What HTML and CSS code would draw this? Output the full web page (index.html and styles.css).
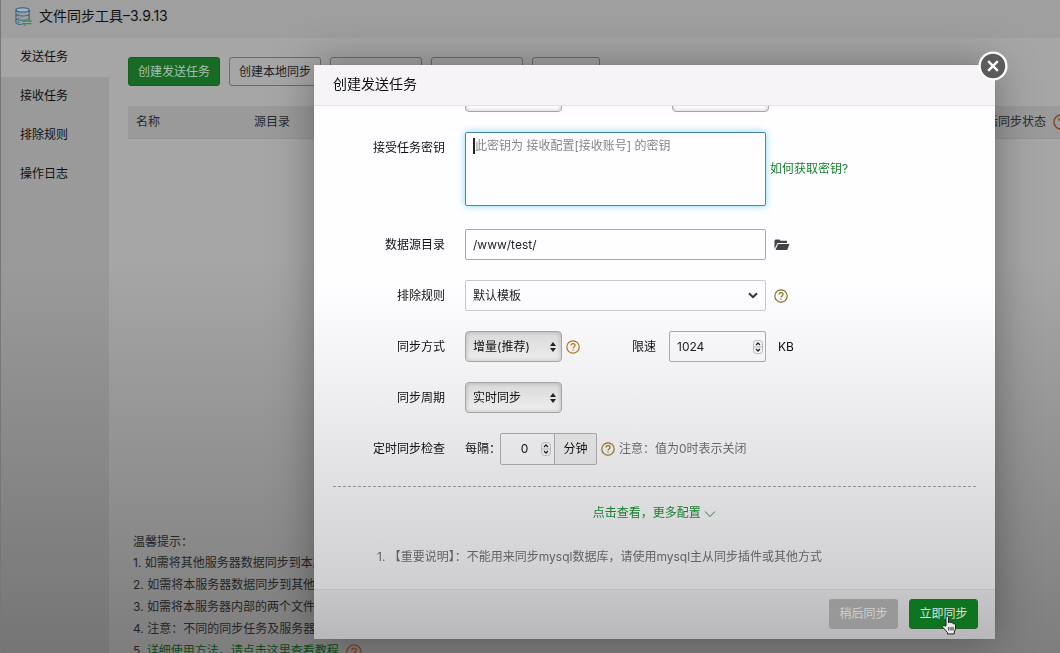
FILE: index.html
```html
<!DOCTYPE html>
<html lang="zh-CN">
<head>
<meta charset="utf-8">
<title>文件同步工具–3.9.13</title>
<link rel="stylesheet" href="styles.css">
</head>
<body>
<svg class="defs" aria-hidden="true">
  <symbol id="help" viewBox="0 0 14 14"><circle cx="7" cy="7" r="6.2"/><path d="M5 5.6C5 4.3 5.9 3.7 7 3.7s2 .7 2 1.8C9 6.9 7 6.9 7 8.4M7 9.5v1.2"/></symbol>
  <symbol id="updown" viewBox="0 0 6 10"><path d="M0 4L3 0l3 4zM0 6h6L3 10z"/></symbol>
  <symbol id="spin" viewBox="0 0 10 14"><rect x=".5" y=".5" width="9" height="13" rx="3"/><path class="mid" d="M0 7h10"/><path class="tick" d="M3 5l2-2 2 2M3 9l2 2 2-2"/></symbol>
</svg>

<div class="app">
  <header class="titlebar">
    <svg class="logo" viewBox="0 0 18 20" aria-hidden="true">
      <g fill="none" stroke="#2c5f88" stroke-width="1.100"><ellipse cx="8" cy="3" rx="7" ry="2.300" fill="#a4b4c2"/><path d="M1 3v4.500q1 2 7 2t7-2V3M1 7.500V12q1 2 7 2t7-2V7.500M1 12v4.500q1 2 6 2M15 12v1"/><path d="M3 7.300h1.500M3 11.800h1.500M3 16.200h1.500"/></g>
      <path d="M8 15h9l-2.500-2.500M17.500 17.500h-9L11 20" fill="none" stroke="#3c8f4c" stroke-width="1.300"/>
    </svg>
    <h1>文件同步工具–3.9.13</h1>
  </header>
  <div class="columns">
    <nav class="side">
      <a class="active" href="#send">发送任务</a>
      <a href="#receive">接收任务</a>
      <a href="#exclude">排除规则</a>
      <a href="#log">操作日志</a>
    </nav>
    <main class="content">
      <div class="toolbar">
        <button class="btn green">创建发送任务</button>
        <button class="btn">创建本地同步</button>
        <button class="btn"></button>
        <button class="btn"></button>
        <button class="btn small"></button>
      </div>
      <div class="listing">
        <table>
          <thead><tr><th class="name">名称</th><th>源目录</th><th class="state">后同步状态 <svg class="help hot"><use href="#help"/></svg></th></tr></thead>
        </table>
      </div>
      <section class="tips">
        <p>温馨提示：</p>
        <ol>
          <li>如需将其他服务器数据同步到本服</li>
          <li>如需将本服务器数据同步到其他服</li>
          <li>如需将本服务器内部的两个文件夹</li>
          <li>注意：不同的同步任务及服务器请</li>
          <li><a href="#guide">详细使用方法，请点击这里查看教程</a> <svg class="help hot"><use href="#help"/></svg></li>
        </ol>
      </section>
    </main>
  </div>
</div>

<div class="overlay">
  <form class="dialog" role="dialog" aria-labelledby="dialog-title">
    <header class="dialog-head"><h2 id="dialog-title">创建发送任务</h2></header>
    <button class="close" type="button" aria-label="关闭"><svg viewBox="0 0 28 28"><circle cx="14" cy="14" r="12.500"/><path d="M9.500 9.500l9 9M18.500 9.500l-9 9"/></svg></button>
    <div class="dialog-body">
      <div class="row first">
        <span class="label"></span>
        <select class="mac" aria-label="类型"></select>
        <select class="mac second" aria-label="模式"></select>
      </div>
      <div class="row tall">
        <label class="label" for="key">接受任务密钥</label>
        <div class="stack wide"><textarea id="key" class="field focus" placeholder="此密钥为 接收配置[接收账号] 的密钥"></textarea><i class="caret"></i></div>
        <a class="link how" href="#key-help">如何获取密钥?</a>
      </div>
      <div class="row">
        <label class="label" for="src">数据源目录</label>
        <input id="src" class="field wide" value="/www/test/">
        <button class="icon-btn" type="button" aria-label="选择目录"><svg class="folder" viewBox="0 0 15 12"><path d="M0 10V1.500L1 .5h4l1 1.200h6.500V4H3z"/><path d="M3.500 5H15l-2.300 6H1z"/></svg></button>
      </div>
      <div class="row">
        <label class="label" for="rule">排除规则</label>
        <div class="stack wide"><select id="rule" class="field pale"><option>默认模板</option></select><svg class="chev" viewBox="0 0 10 7"><path d="M1 1.200l4 4 4-4"/></svg></div>
        <svg class="help olive spaced"><use href="#help"/></svg>
      </div>
      <div class="row">
        <label class="label" for="mode">同步方式</label>
        <div class="stack"><select id="mode" class="mac"><option>增量(推荐)</option></select><svg class="updown"><use href="#updown"/></svg></div>
        <svg class="help gold"><use href="#help"/></svg>
        <label class="limit" for="limit">限速</label>
        <div class="stack speed"><input id="limit" class="field" type="number" value="1024"><svg class="spin"><use href="#spin"/></svg></div>
        <span class="unit">KB</span>
      </div>
      <div class="row">
        <label class="label" for="cycle">同步周期</label>
        <div class="stack"><select id="cycle" class="mac"><option>实时同步</option></select><svg class="updown"><use href="#updown"/></svg></div>
      </div>
      <div class="row">
        <label class="label" for="every">定时同步检查</label>
        <span class="each">每隔：</span>
        <div class="group"><div class="stack"><input id="every" type="number" value="0"><svg class="spin"><use href="#spin"/></svg></div><span class="addon">分钟</span></div>
        <svg class="help olive"><use href="#help"/></svg>
        <span class="hint">注意：值为0时表示关闭</span>
      </div>
      <div class="more"><a class="link" href="#more">点击查看，更多配置 <svg viewBox="0 0 12 8"><path d="M1 1.500l5 5 5-5"/></svg></a></div>
      <ol class="notes"><li>【重要说明】：不能用来同步mysql数据库，请使用mysql主从同步插件或其他方式</li></ol>
    </div>
    <footer class="dialog-foot">
      <button class="act later" type="button">稍后同步</button>
      <button class="act now" type="button">立即同步<svg class="hand" viewBox="0 0 16 20"><path d="M5 11V2.500q0-1.500 1.200-1.500T7.500 2.500V8q.3-1 1.300-1t1.200 1q.4-.7 1.200-.6T12.300 9q.5-.6 1.200-.4T14.500 10v4l-1.200 3v2H6.500v-1.500L2 12.500q-1-1.500 0-2t2 .5z"/><path d="M7.800 12v3.500M10 12v3.500M12 12v3.500"/></svg></button>
    </footer>
  </form>
</div>
</body>
</html>
```
FILE: styles.css
```css
* { box-sizing: border-box; }
body {
  margin: 0;
  height: 100vh;
  overflow: hidden;
  font: 12px/20px Inter, "Noto Sans CJK SC", sans-serif;
  color: #111;
  background: linear-gradient(#a6a6a7 0, #a6a6a7 40%, #7e7e7f 100%) fixed;
}
h1, h2, p, ol { margin: 0; padding: 0; font-weight: 400; }
button, input, select, textarea { font: inherit; color: inherit; margin: 0; }
a { color: inherit; text-decoration: none; }
svg { display: block; flex: none; }
.defs { position: absolute; width: 0; height: 0; }

.app { height: 100vh; display: flex; flex-direction: column; border-left: 1px solid #777; }
.titlebar {
  flex: none;
  height: 38px;
  display: flex;
  align-items: center;
  gap: 7px;
  padding: 0 14px 6px;
  background: rgba(0, 0, 0, .04);
}
.titlebar h1 { font-size: 14px; }
.logo { width: 17px; height: 19px; }
.columns { flex: 1; display: flex; min-height: 0; }
.side { width: 108px; flex: none; display: flex; flex-direction: column; background: linear-gradient(transparent 39px, rgba(0, 0, 0, .07) 39px); }
.side a { padding: 0 19px; line-height: 38px; height: 39px; }
.content { flex: 1; min-width: 0; padding: 19px 0 0 19px; }
.toolbar { display: flex; gap: 9px; }
.btn {
  width: 92px;
  height: 29px;
  padding: 0;
  color: #222;
  background: transparent;
  border: 1px solid #6c6c6d;
  border-radius: 3px;
}
.btn.small { width: 68px; }
.btn.green { background: #176b25; border-color: #145c20; color: #a9bfab; }
.listing { margin-top: 20px; height: 426px; }
table { width: 100%; border-collapse: collapse; table-layout: fixed; }
th {
  height: 32px;
  padding: 0 0 0 8px;
  text-align: left;
  font-weight: 400;
  color: #2a2a2a;
  white-space: nowrap;
  background: rgba(0, 0, 0, .07);
  border-bottom: 1px solid #949495;
}
th.name { width: 118px; }
th.state { width: 82px; }
th .help, .tips .help { display: inline-block; vertical-align: middle; margin-left: 4px; }
.tips { padding-left: 5px; color: #252525; white-space: nowrap; }
.tips ol { list-style: none; counter-reset: tip; line-height: 22px; }
.tips li { height: 22px; }
.tips li::before { counter-increment: tip; content: counter(tip) ". "; }
.tips a { color: #0c4a18; }

.help { width: 14px; height: 14px; fill: none; stroke: #a8751c; stroke-width: 1.2; }
.help.hot { width: 16px; height: 16px; stroke: #7d4320; }
.help.olive { stroke: #82741f; }
.help.gold { stroke: #b3741c; }

.overlay { position: fixed; inset: 0; display: flex; align-items: flex-start; padding: 65px 65px 0 314px; }
.dialog {
  position: relative;
  flex: 1;
  min-width: 0;
  border-radius: 2px;
  background: linear-gradient(#fefdff 0, #fefdff 38%, #f0eff1 56%, #cecdd0 92%);
  box-shadow: 0 0 44px rgba(0, 0, 0, .34), 0 0 1px #666;
}
.dialog-head { height: 41px; padding: 0 19px; background: #f6f4f7; border-bottom: 1px solid #e2e1e3; }
.dialog-head h2 { font-size: 14px; line-height: 38px; }
.close { position: absolute; top: -14px; right: -13px; width: 30px; height: 30px; padding: 0; border: 0; background: none; }
.close svg { width: 30px; height: 30px; fill: #5b5b5c; stroke: #fff; stroke-width: 2.2; }
.dialog-body { overflow: hidden; padding-bottom: 22px; }
.row { display: flex; align-items: center; height: 31px; margin-bottom: 20px; white-space: nowrap; }
.row.first { margin-top: -25px; }
.row.tall { height: 74px; margin-bottom: 23px; }
.label { width: 131px; margin-right: 20px; text-align: right; flex: none; }
.tall .label { align-self: flex-start; line-height: 31px; }
.stack { display: grid; flex: none; align-items: center; }
.stack > * { grid-area: 1 / 1; }
.stack svg { justify-self: end; pointer-events: none; }
.wide { width: 301px; flex: none; }
.field {
  width: 100%;
  height: 31px;
  padding: 0 7px;
  border: 1px solid #a9a8ac;
  border-radius: 2px;
  background: transparent;
  color: #222;
  outline: none;
  appearance: none;
}
.field.wide { width: 301px; }
.field.pale { border-color: #c9c8cc; }
textarea.field { height: 74px; padding: 3px 9px; resize: none; }
textarea::placeholder { color: #858487; opacity: 1; }
.focus { border-color: #4a87a6; box-shadow: 0 0 7px #7fdcf5; }
.caret { align-self: start; width: 2px; height: 16px; margin: 6px 0 0 8px; background: #222; }
.link { color: #15802e; }
.how { margin-left: 4px; }
.icon-btn { padding: 0; margin-left: 8px; border: 0; background: none; }
.folder { width: 16px; height: 12px; fill: #444; }
.chev { width: 10px; height: 7px; margin-right: 8px; fill: none; stroke: #333; stroke-width: 2; }
.mac {
  width: 97px;
  height: 31px;
  padding: 0 7px;
  appearance: none;
  border: 1px solid #a6a6a8;
  border-radius: 4px;
  color: #111;
  background: linear-gradient(#d9d9da, #eeeeef);
  box-shadow: inset 0 0 4px rgba(0, 0, 0, .22);
}
.first .mac { background: #fdfdfe; }
.second { margin-left: 110px; }
.updown { width: 6px; height: 10px; margin-right: 6px; fill: #222; }
.spin { width: 10px; height: 14px; margin-right: 3px; fill: none; stroke: #b5b4b7; }
.tick { stroke: #222; stroke-width: 1.3; }
.row > .help { margin-left: 4px; }
.row > .help.spaced { margin-left: 8px; }
.limit { margin: 0 13px 0 52px; }
.speed { width: 97px; }
input[type="number"] { appearance: textfield; }
input::-webkit-inner-spin-button { appearance: none; }
.unit { margin-left: 12px; }
.each { width: 35px; overflow: visible; }
.group { display: flex; width: 97px; height: 32px; border: 1px solid #a5a4a7; border-radius: 2px; }
.group .stack { width: 53px; }
.group input { width: 53px; padding: 0 6px 0 0; border: 0; background: none; text-align: center; outline: none; }
.addon { flex: 1; text-align: center; line-height: 29px; border-left: 1px solid #a5a4a7; background: rgba(0, 0, 0, .04); }
.hint { margin-left: 4px; color: #68676a; }
.more { margin: 22px 19px 0; padding-top: 16px; border-top: 1px dashed #929194; text-align: center; }
.more svg { display: inline-block; width: 12px; height: 8px; fill: none; stroke: #3c6b46; vertical-align: middle; }
.notes { margin: 24px 0 0 63px; list-style: none; counter-reset: note; color: #626164; }
.notes li::before { counter-increment: note; content: counter(note) ". "; }
.dialog-foot {
  display: flex;
  justify-content: flex-end;
  gap: 11px;
  height: 50px;
  padding: 9px 17px;
  border-top: 1px solid #bdbdbf;
  background: linear-gradient(#c7c7c9, #b8b8ba);
}
.act { width: 69px; height: 30px; padding: 0; border: 0; border-radius: 3px; }
.later { background: #989899; color: #cfcfd0; }
.now { position: relative; background: #0f7420; color: #d6e2d8; border: 1px solid #28602f; }
.hand { position: absolute; left: 31px; top: 15px; width: 16px; height: 20px; fill: #e9e9e9; stroke: #222; stroke-width: 1; }
```
